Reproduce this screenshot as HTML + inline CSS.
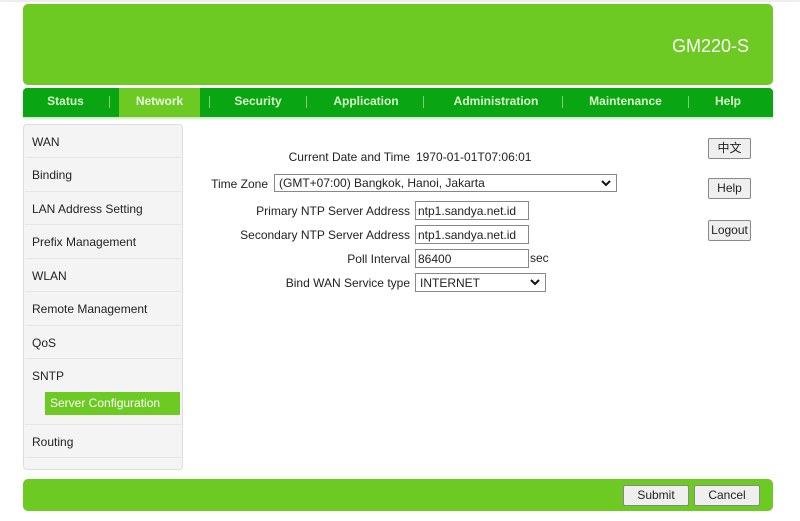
<!DOCTYPE html>
<html><head><meta charset="utf-8"><style>
*{margin:0;padding:0;box-sizing:border-box}
body{width:800px;height:521px;background:#fff;font-family:"Liberation Sans","Noto Sans CJK SC",sans-serif;font-size:12px;color:#222;position:relative;overflow:hidden}
.abs{position:absolute}
#hdr{left:23px;top:4px;width:750px;height:81px;background:#6cca22;border-radius:5px}
#hdr span{position:absolute;right:24px;top:32px;color:#fff;font-size:18px}
#nav{left:23px;top:88px;width:750px;height:29px;background:#0aa512;border-radius:4px 4px 0 0;box-shadow:0 2px 2px #cde8c0}
.tab{position:absolute;top:0;height:29px;line-height:27px;color:#d8f5c8;font-weight:bold;font-size:12px;text-align:center}
.sep{position:absolute;top:8px;width:1px;height:12px;background:#7fd070}
#side{left:23px;top:124px;width:160px;height:346px;background:#f4f4f4;border:1px solid #ddd;border-radius:4px}
.it{position:absolute;left:8px;font-size:12px;color:#222}
.ln{position:absolute;left:1px;width:156px;height:1px;background:#e6e6e6}
.lbl{position:absolute;text-align:right;right:390px;font-size:12px}
.in{position:absolute;height:19px;border:1px solid #888;background:#fff;font-size:12px;padding:2px 2px}
.btn{position:absolute;border:1px solid #888;background:#efefef;border-radius:2px;font-size:12px;text-align:center}
#foot{left:23px;top:479px;width:750px;height:32px;background:#6cca22;border-radius:5px}
.chev{position:absolute;right:5px;top:5px}
</style></head><body>
<div class="abs" style="left:0;top:0;width:800px;height:2px;background:#eee"></div>
<div id="hdr" class="abs"><span>GM220-S</span></div>
<div id="nav" class="abs">
<div class="tab" style="left:0;width:85px">Status</div>
<div class="tab" style="left:96px;width:81px;background:#6cca22;color:#e8f8e0">Network</div>
<div class="tab" style="left:190px;width:90px">Security</div>
<div class="tab" style="left:292px;width:102px">Application</div>
<div class="tab" style="left:408px;width:130px">Administration</div>
<div class="tab" style="left:550px;width:105px">Maintenance</div>
<div class="tab" style="left:670px;width:70px">Help</div>
<div class="sep" style="left:86px"></div><div class="sep" style="left:186px"></div><div class="sep" style="left:283px"></div><div class="sep" style="left:400px"></div><div class="sep" style="left:539px"></div><div class="sep" style="left:665px"></div>
</div>
<div id="side" class="abs">
<div class="it" style="top:10px">WAN</div><div class="ln" style="top:32px"></div>
<div class="it" style="top:43px">Binding</div><div class="ln" style="top:66px"></div>
<div class="it" style="top:77px">LAN Address Setting</div><div class="ln" style="top:99px"></div>
<div class="it" style="top:110px">Prefix Management</div><div class="ln" style="top:133px"></div>
<div class="it" style="top:144px">WLAN</div><div class="ln" style="top:166px"></div>
<div class="it" style="top:177px">Remote Management</div><div class="ln" style="top:200px"></div>
<div class="it" style="top:211px">QoS</div><div class="ln" style="top:233px"></div>
<div class="it" style="top:244px">SNTP</div>
<div class="abs" style="left:21px;top:267px;width:135px;height:23px;background:#6cca22;color:#fff;padding:4px 0 0 5px">Server Configuration</div>
<div class="ln" style="top:299px"></div>
<div class="it" style="top:310px">Routing</div><div class="ln" style="top:332px"></div>
</div>
<div class="lbl" style="top:150px">Current Date and Time</div>
<div class="abs" style="left:416px;top:150px">1970-01-01T07:06:01</div>
<div class="lbl" style="top:177px;right:532px">Time Zone</div>
<div class="in" style="left:274px;top:174px;width:343px;height:18px;padding:1px 4px">(GMT+07:00) Bangkok, Hanoi, Jakarta<svg class="chev" width="10" height="7" viewBox="0 0 10 7"><path d="M1 1L5 5L9 1" fill="none" stroke="#111" stroke-width="2"/></svg></div>
<div class="lbl" style="top:204px">Primary NTP Server Address</div>
<div class="in" style="left:415px;top:201px;width:114px">ntp1.sandya.net.id</div>
<div class="lbl" style="top:228px">Secondary NTP Server Address</div>
<div class="in" style="left:415px;top:225px;width:114px">ntp1.sandya.net.id</div>
<div class="lbl" style="top:252px">Poll Interval</div>
<div class="in" style="left:415px;top:249px;width:114px">86400</div>
<div class="abs" style="left:530px;top:251px">sec</div>
<div class="lbl" style="top:276px">Bind WAN Service type</div>
<div class="in" style="left:415px;top:273px;width:131px;height:19px;padding:2px 4px">INTERNET<svg class="chev" width="10" height="7" viewBox="0 0 10 7"><path d="M1 1L5 5L9 1" fill="none" stroke="#111" stroke-width="2"/></svg></div>
<div class="btn" style="left:708px;top:138px;width:43px;height:21px;line-height:19px">中文</div>
<div class="btn" style="left:708px;top:178px;width:43px;height:21px;line-height:19px">Help</div>
<div class="btn" style="left:708px;top:220px;width:43px;height:21px;line-height:19px">Logout</div>
<div id="foot" class="abs"></div>
<div class="btn" style="left:623px;top:485px;width:66px;height:21px;line-height:19px">Submit</div>
<div class="btn" style="left:694px;top:485px;width:66px;height:21px;line-height:19px">Cancel</div>
</body></html>
